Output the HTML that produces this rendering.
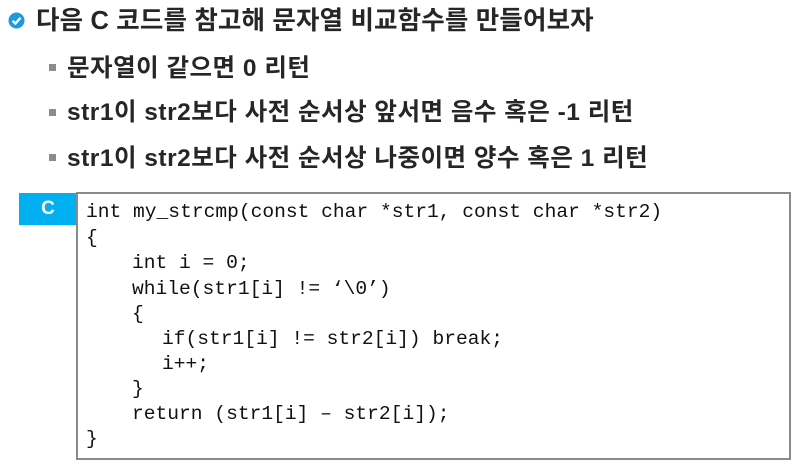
<!DOCTYPE html>
<html><head><meta charset="utf-8"><style>
body{margin:0;width:805px;height:467px;background:#fff;position:relative;overflow:hidden;font-family:"Liberation Sans","Noto Sans CJK KR",sans-serif;color:#262626}
.t{position:absolute;font-weight:bold;white-space:nowrap;line-height:1}
.sq{position:absolute;width:7px;height:7px;background:#8c8c8c}
.code{position:absolute;font-family:"Liberation Mono",monospace;font-size:19.6px;color:#111;white-space:pre;line-height:1}
</style></head><body>
<svg style="position:absolute;left:8px;top:12px" width="17" height="17" viewBox="0 0 17 17"><circle cx="8.5" cy="8.5" r="8" fill="#1a9be0"/><path d="M4.5 8.8 L7.4 11.5 L12.5 5.8" stroke="#fff" stroke-width="2.4" fill="none"/></svg>
<div class="t" style="left:36px;top:9px;font-size:25.5px;letter-spacing:0.15px">다음 C 코드를 참고해 문자열 비교함수를 만들어보자</div>
<div class="sq" style="left:49px;top:64px"></div>
<div class="t" style="left:67px;top:57px;font-size:24.5px;letter-spacing:0.5px">문자열이 같으면 0 리턴</div>
<div class="sq" style="left:49px;top:109px"></div>
<div class="t" style="left:67px;top:101px;font-size:24.5px;letter-spacing:0.5px">str1이 str2보다 사전 순서상 앞서면 음수 혹은 -1 리턴</div>
<div class="sq" style="left:49px;top:154px"></div>
<div class="t" style="left:67px;top:147px;font-size:24.5px;letter-spacing:0.5px">str1이 str2보다 사전 순서상 나중이면 양수 혹은 1 리턴</div>
<div style="position:absolute;left:19px;top:193px;width:58px;height:32px;background:#00b0f0;color:#fff;font-weight:bold;font-size:19px;line-height:32px;text-align:center">C</div>
<div style="position:absolute;left:76px;top:192px;width:711px;height:264px;border:2px solid #8a8a8a"></div>
<div class="code" style="left:86px;top:203px">int my_strcmp(const char *str1, const char *str2)</div>
<div class="code" style="left:86px;top:229px">{</div>
<div class="code" style="left:132px;top:254px">int i = 0;</div>
<div class="code" style="left:132px;top:280px">while(str1[i] != ‘\0’)</div>
<div class="code" style="left:132px;top:305px">{</div>
<div class="code" style="left:162px;top:330px">if(str1[i] != str2[i]) break;</div>
<div class="code" style="left:162px;top:355px">i++;</div>
<div class="code" style="left:132px;top:380px">}</div>
<div class="code" style="left:132px;top:405px">return (str1[i] – str2[i]);</div>
<div class="code" style="left:86px;top:430px">}</div>
</body></html>
